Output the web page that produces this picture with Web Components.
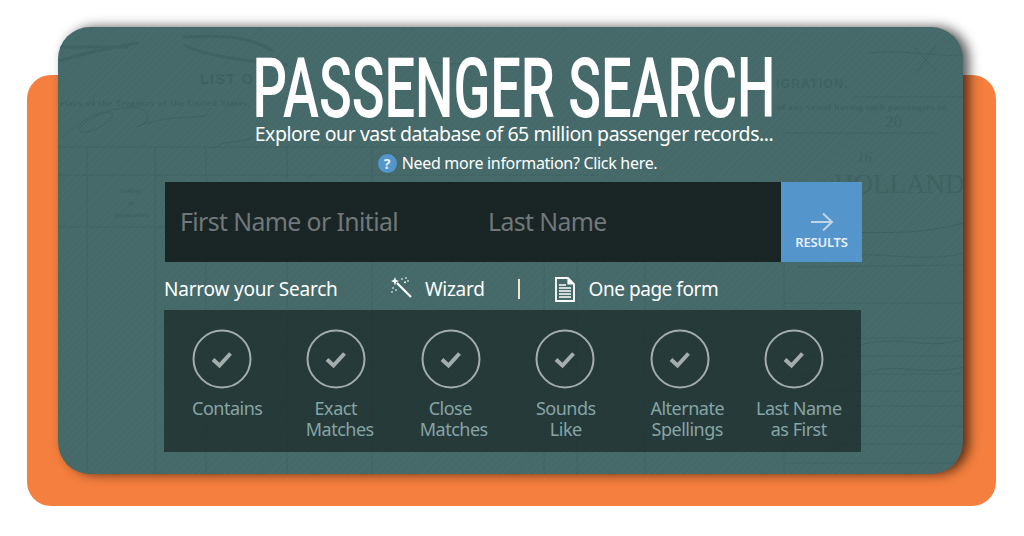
<!DOCTYPE html>
<html>
<head>
<meta charset="utf-8">
<title>Passenger Search</title>
<style>
    html, body { margin: 0; background: #ffffff; }
    body { font-family: "Noto Sans", "Open Sans", sans-serif; }
</style>
</head>
<body>
<search-page>
    <search-title></search-title>
    <search-bar></search-bar>
    <narrow-row></narrow-row>
    <option-panel>
        <search-option shift="-2">Contains</search-option>
        <search-option shift="-4"><span style="margin-right:8px">Exact</span><br>Matches</search-option>
        <search-option shift="-4.5"><span style="margin-right:7px">Close</span><br>Matches</search-option>
        <search-option shift="-7">Sounds<br>Like</search-option>
        <search-option shift="0">Alternate<br>Spellings</search-option>
        <search-option shift="-3">Last Name<br>as First</search-option>
    </option-panel>
</search-page>

<script>
class SearchPage extends HTMLElement {
    constructor() {
        super()
        this.attachShadow({ mode: 'open' })
        this.shadowRoot.innerHTML = `
            <style>
                :host { display: block; width: 1024px; height: 536px; overflow: hidden; }
                .orange {
                    margin: 75px 28px 0 27px;
                    height: 431px;
                    background: #f47f3e;
                    border-radius: 24px;
                    display: flow-root;
                }
                .card {
                    position: relative;
                    margin: -48px 33px 0 31px;
                    height: 447px;
                    box-sizing: border-box;
                    padding: 0 102px 0 106px;
                    border-radius: 32px;
                    background: #456a69;
                    box-shadow: 6px 0 12px rgba(0, 0, 0, 0.65);
                }
                .paper {
                    position: absolute;
                    inset: 0;
                    width: 100%;
                    height: 100%;
                    border-radius: 32px;
                }
                .hatch {
                    position: absolute;
                    inset: 0;
                    border-radius: 32px;
                    background: repeating-linear-gradient(135deg, rgba(255,255,255,0.02) 0 1px, rgba(0,0,0,0.025) 1px 2.5px);
                }
                .content { position: relative; }
            </style>
            <div class="orange">
                <div class="card">
                    <svg class="paper" viewBox="0 0 905 447" fill="none" stroke="#3c6261" stroke-width="1" font-family="Liberation Serif, serif">
                        <g stroke-opacity=".7">
                            <path d="M0 120H540M0 148H540M0 200H540"/>
                            <path d="M29 120V447M97 120V447M148 120V447M229 120V447M314 120V447M486 180V447M519 180V447M587 180V447M726 230V447"/>
                            <path d="M726 276H905M726 311H905M726 329H905M726 347H905M726 364H905M726 379H905M726 399H905M726 417H905M726 436H905"/>
                        </g>
                        <g stroke-width="3" stroke-opacity=".8">
                            <path d="M2 34C30 24 60 20 80 16M125 10C160 8 190 8 215 24M126 18C150 30 190 34 230 38M0 20H70"/>
                        </g>
                        <g stroke-opacity=".9">
                            <path d="M4 112C20 96 40 82 52 86S30 110 22 104S70 70 86 84S60 104 90 96S130 92 150 88M155 122C165 112 180 118 195 110M340 28C380 40 420 40 460 26"/>
                            <path d="M856 20L878 44M878 18L860 44M810 26C840 22 880 30 905 28M725 106H880M795 70H905M795 320C840 305 870 325 905 312M810 345C840 335 870 350 905 340"/>
                            <path d="M760 212C800 198 840 214 905 196M770 232C810 220 860 238 905 226M740 240L905 238"/>
                        </g>
                        <g fill="#3c6261" stroke="none">
                            <text x="142" y="57" font-size="14" font-weight="700" font-family="Liberation Sans, sans-serif" letter-spacing="1.500">LIST O</text>
                            <text x="2" y="79" font-size="9" font-weight="700" letter-spacing=".7">etary of the Treasury of the United States,</text>
                            <text x="718" y="61" font-size="12" font-weight="700" font-family="Liberation Sans, sans-serif" letter-spacing="1.300">IGRATION.</text>
                            <text x="719" y="83" font-size="9" font-weight="700" letter-spacing=".5">of any vessel having such passengers on</text>
                            <text x="776" y="166" font-size="27">HOLLAND</text>
                            <text x="827" y="100" font-size="17">20</text>
                            <text x="799" y="135" font-size="15" font-style="italic">16</text>
                            <text x="62" y="166" font-size="7" font-weight="700">Sailing</text>
                            <text x="70" y="178" font-size="7" font-weight="700">or</text>
                            <text x="56" y="190" font-size="7" font-weight="700">Occupation</text>
                        </g>
                    </svg>
                    <div class="hatch"></div>
                    <div class="content"><slot></slot></div>
                </div>
            </div>
        `
    }
}

class SearchTitle extends HTMLElement {
    constructor() {
        super()
        this.attachShadow({ mode: 'open' })
        this.shadowRoot.innerHTML = `
            <style>
                :host { display: block; color: #ffffff; text-align: center; padding-top: 24px; margin-left: 3px; }
                h1 {
                    margin: 0;
                    height: 69px;
                    box-sizing: border-box;
                    padding-bottom: 1px;
                    display: flex;
                    justify-content: center;
                    align-items: flex-end;
                    font: 500 83px/60px Roboto, "Liberation Sans", sans-serif;
                    white-space: nowrap;
                }
                h1 span { display: block; flex: none; transform: scaleX(0.652); }
                p { margin: 0; white-space: nowrap; }
                .sub { font-size: 19.500px; line-height: 28px; letter-spacing: -0.45px; }
                .help {
                    display: flex;
                    justify-content: center;
                    align-items: center;
                    gap: 5px;
                    font-size: 16px;
                    line-height: 24px;
                    letter-spacing: -0.3px;
                    margin: 3px 0 0 7px;
                }
                .q {
                    width: 19px;
                    height: 19px;
                    border-radius: 50%;
                    background: #5495cb;
                    color: #e6eef5;
                    font-size: 14px;
                    font-weight: 700;
                    line-height: 19px;
                    text-align: center;
                    letter-spacing: 0;
                }
            </style>
            <h1><span>PASSENGER SEARCH</span></h1>
            <p class="sub">Explore our vast database of 65 million passenger records...</p>
            <p class="help"><span class="q">?</span><span>Need more information? Click here.</span></p>
        `
    }
}

class SearchBar extends HTMLElement {
    constructor() {
        super()
        this.attachShadow({ mode: 'open' })
        this.shadowRoot.innerHTML = `
            <style>
                :host { display: flex; height: 80px; margin-top: 7px; margin-left: 1px; width: 697px; }
                .fields {
                    flex: 1;
                    display: grid;
                    grid-template-columns: 308px 1fr;
                    align-items: center;
                    padding: 0 0 2px 15px;
                    background: rgba(19, 27, 27, 0.88);
                    color: #71787a;
                    font-size: 24.800px;
                    letter-spacing: -0.6px;
                }
                button {
                    width: 81px;
                    border: 0;
                    padding: 0;
                    background: #5495cb;
                    color: #e8f0f7;
                    font: inherit;
                    font-size: 13px;
                    font-weight: 600;
                    letter-spacing: -0.2px;
                    display: flex;
                    flex-direction: column;
                    align-items: center;
                }
                svg { display: block; margin-top: 30px; margin-bottom: 1px; }
            </style>
            <div class="fields"><span>First Name or Initial</span><span>Last Name</span></div>
            <button>
                <svg width="24" height="20" viewBox="0 0 24 20" fill="none" stroke="#c3d5e5" stroke-width="2"><path d="M1 10H22M13 1.500L22 10L13 18.500"/></svg>
                RESULTS
            </button>
        `
    }
}

class NarrowRow extends HTMLElement {
    constructor() {
        super()
        this.attachShadow({ mode: 'open' })
        this.shadowRoot.innerHTML = `
            <style>
                :host {
                    display: flex;
                    align-items: center;
                    height: 48px;
                    box-sizing: border-box;
                    padding-top: 6px;
                    color: #ffffff;
                    font-size: 19px;
                    letter-spacing: -0.3px;
                    white-space: nowrap;
                }
                .label { width: 226px; letter-spacing: -0.2px; }
                .wiz { display: flex; align-items: center; gap: 12px; width: 128px; }
                .sep { width: 1.500px; height: 20px; background: #f3e3c8; margin-right: 35px; }
                .form { display: flex; align-items: center; gap: 14px; letter-spacing: -0.45px; }
                svg { display: block; }
            </style>
            <span class="label">Narrow your Search</span>
            <span class="wiz">
                <svg width="23" height="23" viewBox="0 0 23 23" fill="none" style="margin-top:-4px">
                    <path d="M7 7L21 21" stroke="#fff" stroke-width="2.200"/>
                    <path d="M5 1L6 4L9 5L6 6.200L5 9.500L3.800 6.200L1 5L3.800 4ZM12 2l1 1-1 1-1-1zM16 1l1 1-1 1-1-1zM15 5l1.200 1.200L15 7.400l-1.200-1.200zM18 4l1 1-1 1-1-1zM3 11l1 1-1 1-1-1zM6 13l1 1-1 1-1-1zM2 15l1 1-1 1-1-1z" fill="#fff"/>
                </svg>
                <span>Wizard</span>
            </span>
            <span class="sep"></span>
            <span class="form">
                <svg width="20" height="25" viewBox="0 0 20 25" fill="none">
                    <path d="M1 1H13L19 7V24H1Z" stroke="#fff" stroke-width="1.800"/>
                    <path d="M13 1V7H19" fill="#fff" stroke="#fff" stroke-width="1.200"/>
                    <path d="M4 8H11M4 11H16M4 14H16M4 17H16M4 20H16" stroke="#fff" stroke-width="1.500"/>
                </svg>
                <span>One page form</span>
            </span>
        `
    }
}

class OptionPanel extends HTMLElement {
    constructor() {
        super()
        this.attachShadow({ mode: 'open' })
        this.shadowRoot.innerHTML = `
            <style>
                :host {
                    display: grid;
                    grid-template-columns: repeat(6, 114.5px);
                    width: 697px;
                    height: 142px;
                    box-sizing: border-box;
                    padding: 19px 0 0 0;
                    background: rgba(19, 27, 27, 0.6);
                }
            </style>
            <slot></slot>
        `
    }
}

class SearchOption extends HTMLElement {
    constructor() {
        super()
        this.attachShadow({ mode: 'open' })
        const shift = 8 + Number(this.getAttribute('shift') || 0)
        this.shadowRoot.innerHTML = `
            <style>
                :host { display: block; color: #86a5a5; font-size: 18px; line-height: 21px; letter-spacing: -0.5px; white-space: nowrap; }
                svg { display: block; margin-left: 27.500px; }
                .text { width: 114.500px; text-align: center; margin: 9px 0 0 ${shift}px; }
            </style>
            <svg width="60" height="60" viewBox="0 0 60 60" fill="none">
                <circle cx="30" cy="30" r="28.500" stroke="#a3adab" stroke-width="2"/>
                <path d="M21 30.500L27.500 36.500L38.500 24.500" stroke="#a3adab" stroke-width="4"/>
            </svg>
            <div class="text"><slot></slot></div>
        `
    }
}

customElements.define('search-page', SearchPage)
customElements.define('search-title', SearchTitle)
customElements.define('search-bar', SearchBar)
customElements.define('narrow-row', NarrowRow)
customElements.define('option-panel', OptionPanel)
customElements.define('search-option', SearchOption)
</script>
</body>
</html>
